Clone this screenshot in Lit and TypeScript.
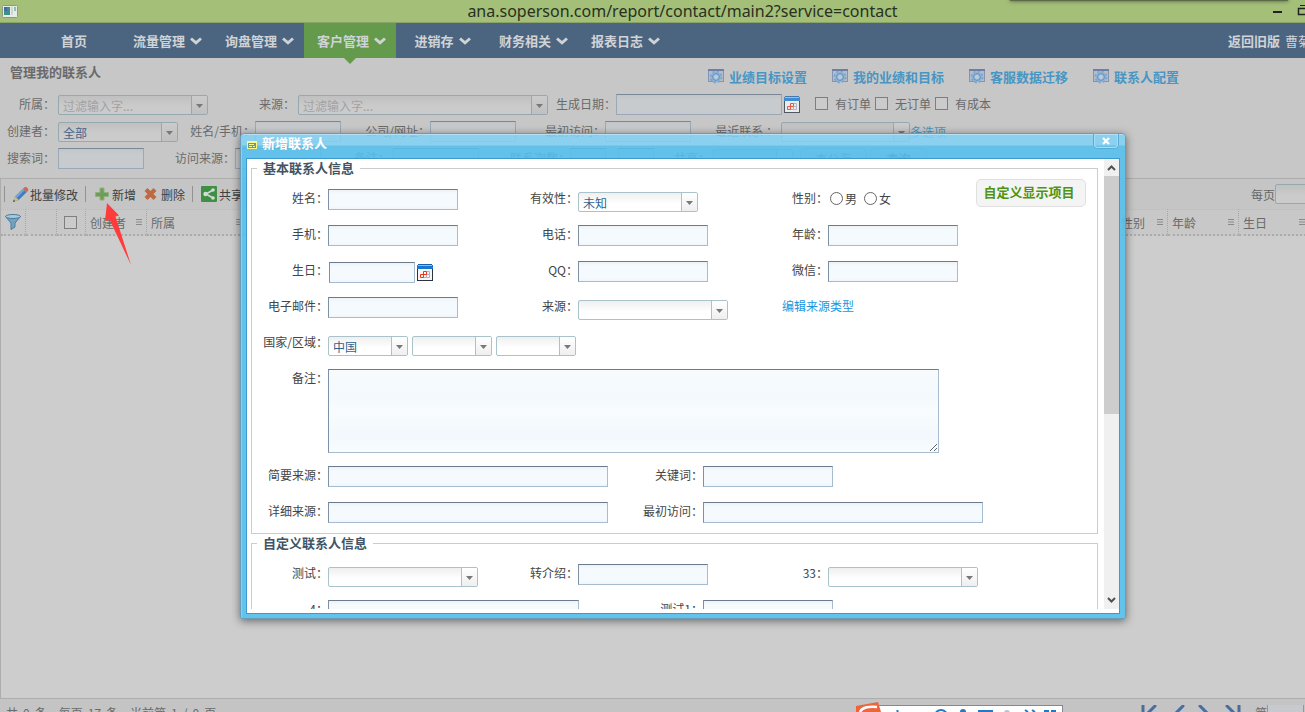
import { LitElement, html, css, svg, nothing } from "lit";
import { customElement, property } from "lit/decorators.js";
import { styleMap } from "lit/directives/style-map.js";

const base = css`
  *, *::before, *::after { box-sizing: border-box; }
  input, select, textarea, button { font: inherit; color: inherit; margin: 0; border-radius: 0; outline: none; }
  button { background: none; border: 0; padding: 0; cursor: pointer; }
  a { text-decoration: none; }
  svg { display: block; flex: none; }
`;

const calendarIcon = html`<svg width="16" height="17" viewBox="0 0 16 17">
  <rect x="0.5" y="3.5" width="15" height="13" fill="#f4f6f8" stroke="#2c3440"/>
  <rect x="0" y="1" width="16" height="4" fill="#1577d8"/><rect x="1" y="1" width="14" height="1" fill="#7cc4f8"/>
  <rect x="1" y="0" width="14" height="1" fill="#1a5fa8"/>
  <g fill="none" stroke="#aab4c0"><path d="M9.500 7.500h3v3h-3zM9.500 10.500h3v3h-3zM6.500 10.500h3v3h-3z"/></g>
  <g fill="none" stroke="#f03418"><path d="M6.500 7.500h3v3h-3zM3.500 10.500h3v3h-3z"/></g>
</svg>`;

const gearIcon = html`<svg width="16" height="15" viewBox="0 0 16 15">
  <rect x="0.5" y="0.5" width="15" height="12" fill="#b3bdc8" stroke="#8593b4"/><path d="M0 1h16" stroke="#6e7ea8" stroke-width="2"/>
  <circle cx="8" cy="8" r="5.200" fill="#8fb4d8"/>
  <circle cx="8" cy="8" r="5.600" fill="none" stroke="#7ba3cb" stroke-width="1.600" stroke-dasharray="2.200 2.200"/>
  <circle cx="8" cy="8" r="3.400" fill="#a3c2de" stroke="#5f8fbf" stroke-width="1"/>
  <circle cx="8" cy="8" r="1.700" fill="#c3cbd4"/>
</svg>`;

/** Drop-down with a gradient face and a separate arrow cell. */
@customElement("combo-box")
export class ComboBox extends LitElement {
  @property() label = "";
  @property() value = "";
  @property() placeholder = "";
  @property({ type: Number }) width = 150;

  static styles = [base, css`
    :host { display: block; flex: none; }
    .combo { position: relative; height: 20px; border: 1px solid var(--edge, #a9c0c8); border-radius: 2px; overflow: hidden;
      background: linear-gradient(var(--face-top, #f1f1f1), var(--face, #fff) 60%); }
    .field { appearance: none; display: block; width: 100%; height: 18px; padding: 2px 20px 0 4px; border: 0; background: transparent;
      color: var(--value, #2d6293); font-size: 12px; line-height: 16px; }
    .field::placeholder { color: var(--hint, #a0a0a0); opacity: 1; }
    .arrow { position: absolute; top: 0; right: 0; width: 16px; height: 18px; border-left: 1px solid var(--edge, #b8c8ce);
      background: linear-gradient(var(--face, #fff), var(--face-top, #ececec)); pointer-events: none; display: flex; align-items: center; justify-content: center; }
    .tri { margin-top: 2px; }
  `];

  render() {
    return html`<div class="combo" style=${styleMap({ width: `${this.width}px` })}>
      ${this.placeholder
        ? html`<input class="field" type="text" aria-label=${this.label} placeholder=${this.placeholder}>`
        : html`<select class="field" aria-label=${this.label}><option>${this.value}</option></select>`}
      <span class="arrow"><svg class="tri" width="7" height="4" viewBox="0 0 7 4"><path d="M0 0h7L3.500 4z" fill="#787878"/></svg></span>
    </div>`;
  }
}

interface Cell {
  label: string;
  kind: "text" | "combo" | "date" | "area" | "gender" | "region" | "link";
  width?: number;
  value?: string;
}

const basicRows: { cols: number; cells: Cell[] }[] = [
  { cols: 3, cells: [{ label: "姓名", kind: "text" }, { label: "有效性", kind: "combo", width: 120, value: "未知" }, { label: "性别", kind: "gender" }] },
  { cols: 3, cells: [{ label: "手机", kind: "text" }, { label: "电话", kind: "text" }, { label: "年龄", kind: "text" }] },
  { cols: 3, cells: [{ label: "生日", kind: "date" }, { label: "QQ", kind: "text" }, { label: "微信", kind: "text" }] },
  { cols: 3, cells: [{ label: "电子邮件", kind: "text" }, { label: "来源", kind: "combo", width: 150 }, { label: "编辑来源类型", kind: "link" }] },
  { cols: 1, cells: [{ label: "国家/区域", kind: "region" }] },
  { cols: 1, cells: [{ label: "备注", kind: "area" }] },
  { cols: 2, cells: [{ label: "简要来源", kind: "text", width: 280 }, { label: "关键词", kind: "text" }] },
  { cols: 2, cells: [{ label: "详细来源", kind: "text", width: 280 }, { label: "最初访问", kind: "text", width: 280 }] },
];

const customRows: typeof basicRows = [
  { cols: 3, cells: [{ label: "测试", kind: "combo", width: 150 }, { label: "转介绍", kind: "text" }, { label: "33", kind: "combo", width: 150 }] },
  { cols: 2, cells: [{ label: "4", kind: "text", width: 251 }, { label: "测试1", kind: "text" }] },
];

@customElement("contact-dialog")
export class ContactDialog extends LitElement {
  static styles = [base, css`
    :host { display: flex; flex-direction: column; border: 1px solid #6a9cb8; border-radius: 4px 4px 2px 2px; padding: 0 5px 4px;
      background: linear-gradient(rgba(128, 210, 246, 0.84) 0, rgba(128, 210, 246, 0.84) 11px, rgba(80, 192, 240, 0.84) 12px, rgba(84, 192, 238, 0.88) 26px, rgba(90, 194, 238, 0.92) 100%);
      box-shadow: inset 0 1px 0 #b5e0f4, inset 1px 0 0 #8ad0ee, 0 2px 8px rgba(0, 0, 0, 0.5); font-size: 12px; color: #444; }
    .bar { display: flex; height: 24px; align-items: flex-start; gap: 5px; padding: 0 2px 0 1px; }
    .bar-icon { margin-top: 7px; }
    .title { flex: 1; margin: 0; font-size: 13px; line-height: 18px; color: #fff; font-weight: 700; }
    .close { width: 24px; height: 14px; border: 1px solid #a6def6; border-top: 0; border-radius: 0 0 4px 4px; display: flex; align-items: center; justify-content: center; box-shadow: 0 0 0 1px #5aa9d4; }
    .body { flex: 1; min-height: 0; display: flex; border: 1px solid #3c9ace; background: #fff; padding-bottom: 4px; }
    .scroll { flex: 1; min-width: 0; overflow: hidden; padding: 0 6px 0 4px; display: flex; flex-direction: column; }
    .group { position: relative; flex: none; margin: 0; padding: 12px 0 10px; border: 1px solid #ccc; min-width: 0; }
    .legend { margin-left: 5px; padding: 0 6px; font-size: 13px; line-height: 18px; font-weight: 700; color: #435464; }
    .row { display: grid; height: 36px; align-items: start; }
    .row:last-child { height: 21px; }
    .cols3 { grid-template-columns: repeat(3, 250px); }
    .cols2 { grid-template-columns: repeat(2, 375px); }
    .tall { height: 97px; }
    .cell { display: flex; align-items: flex-start; }
    .label { flex: 0 0 76px; text-align: right; line-height: 18px; white-space: nowrap; }
    .text { height: 21px; border: 1px solid #a8bccf; border-top-color: #6a7b8e; border-left-color: #7d90a4; padding: 0 4px;
      background: linear-gradient(#eff2f4, #f5fafe 4px, #f5fafe 16px, #f1f5f8); }
    .date { width: 86px; height: 21px; }
    .area { width: 611px; height: 84px; background: linear-gradient(#f7fbfd, #f3f9fd 33%, #f8fcfd 50%, #f2f8fd 80%, #f8fcfd); resize: both; padding: 4px; }
    .low { margin-top: 3px; display: flex; gap: 4px; }
    .with-icon { display: flex; gap: 2px; margin: 1px 0 0 1px; align-items: center; }
    .radios { display: flex; align-items: center; height: 18px; padding-left: 2px; gap: 7px; }
    .radio { display: flex; align-items: center; gap: 2px; }
    .dot { appearance: none; width: 13px; height: 13px; border: 1px solid #666; border-radius: 50%; background: #fff; }
    .link { color: #1b95e0; line-height: 18px; margin-left: 30px; }
    .custom { position: absolute; top: 2px; right: 11px; width: 110px; height: 28px; border: 1px solid #e0e0e0; border-radius: 5px; background: #f4f4f4;
      color: #4f9410; font-size: 13px; font-weight: 700; line-height: 24px; padding: 0 4px 2px 0; white-space: nowrap; }
    .track { flex: 0 0 15px; display: flex; flex-direction: column; align-items: center; background: #f0f0f0; }
    .step { height: 17px; width: 15px; display: flex; align-items: center; justify-content: center; }
    .thumb { width: 15px; height: 238px; background: #cdcdcd; }
    .step.end { margin-top: auto; }
  `];

  private control(c: Cell, id: string) {
    switch (c.kind) {
      case "combo": return html`<div class="low"><combo-box label=${c.label} .width=${c.width ?? 150} .value=${c.value ?? ""}></combo-box></div>`;
      case "date": return html`<span class="with-icon"><input class="text date" id=${id} type="text"><button type="button" aria-label="日期">${calendarIcon}</button></span>`;
      case "area": return html`<textarea class="text area" id=${id}></textarea>`;
      case "gender": return html`<span class="radios">${["男", "女"].map((g) => html`<label class="radio"><input class="dot" type="radio" name="gender">${g}</label>`)}</span>`;
      case "region": return html`<div class="low">${["中国", "", ""].map((v) => html`<combo-box label=${c.label} .width=${80} .value=${v}></combo-box>`)}</div>`;
      default: return html`<input class="text" id=${id} type="text" style=${styleMap({ width: `${c.width ?? 130}px` })}>`;
    }
  }

  private rows(rows: typeof basicRows, prefix: string) {
    return html`<div>${rows.map((r, i) => html`<div class="row cols${r.cols} ${r.cells[0].kind === "area" ? "tall" : ""}">
      ${r.cells.map((c, j) => c.kind === "link"
        ? html`<a class="link" href="#">${c.label}</a>`
        : html`<div class="cell"><label class="label" for="${prefix}${i}${j}">${c.label}：</label>${this.control(c, `${prefix}${i}${j}`)}</div>`)}
    </div>`)}</div>`;
  }

  render() {
    return html`
      <header class="bar">
        <svg class="bar-icon" width="10" height="8" viewBox="0 0 10 8"><rect x="0.5" y="0.5" width="9" height="7" fill="#6a9a88" stroke="#fbf68c"/><path d="M1 1.500h8M2 3.500h5M2 5.500h3M6 5.500h2" stroke="#fbf68c"/></svg>
        <h2 class="title">新增联系人</h2>
        <button class="close" type="button" aria-label="关闭"><svg width="8" height="8" viewBox="0 0 8 8"><path d="M1 1l6 6M7 1l-6 6" stroke="#fff" stroke-width="2.200"/></svg></button>
      </header>
      <div class="body">
        <form class="scroll">
          <fieldset class="group">
            <legend class="legend">基本联系人信息</legend>
            ${this.rows(basicRows, "b")}
            <button class="custom" type="button">自定义显示项目</button>
          </fieldset>
          <fieldset class="group">
            <legend class="legend">自定义联系人信息</legend>
            ${this.rows(customRows, "c")}
          </fieldset>
        </form>
        <div class="track">
          <span class="step"><svg width="9" height="7" viewBox="0 0 9 7"><path d="M1 6l3.500-3.500L8 6" fill="none" stroke="#505050" stroke-width="2"/></svg></span>
          <span class="thumb"></span>
          <span class="step end"><svg width="9" height="7" viewBox="0 0 9 7"><path d="M1 1l3.500 3.500L8 1" fill="none" stroke="#505050" stroke-width="2"/></svg></span>
        </div>
      </div>`;
  }
}

const menu = ["首页", "流量管理", "询盘管理", "客户管理", "进销存", "财务相关", "报表日志"];
const links = ["业绩目标设置", "我的业绩和目标", "客服数据迁移", "联系人配置"];
const totals = [["共", "0", "条"], ["每页", "17", "条"], ["当前第", "1", "/", "0", "页"]];

@customElement("app-root")
export class AppRoot extends LitElement {
  static styles = [base, css`
    :host { position: relative; display: flex; flex-direction: column; height: 100vh; overflow: hidden; background: #c7c7c7; color: #6a6a6a;
      font-family: "Noto Sans CJK SC", "Liberation Sans", sans-serif; font-size: 12px;
      --edge: #98a8b0; --face: #cbcbcb; --face-top: #c0c0c0; --hint: #a2a2a2; --value: #45658c; }
    .titlebar { flex: none; position: relative; display: flex; align-items: center; height: 23px; background: #a3bf78; border-bottom: 1px solid #8ba268; padding-left: 2px; overflow: hidden; }
    .caption { flex: 1; margin: 0; padding-left: 74px; text-align: center; font: 400 16px/22px "Noto Sans", sans-serif; color: #2a3022; }
    .above { position: absolute; top: -4px; right: 17px; width: 278px; height: 5px; background: #5c6b4a; box-shadow: 0 0 4px #4b5938; }
    .wincontrols { display: flex; gap: 15px; flex: 0 0 32px; overflow: hidden; }
    .nav { flex: none; display: flex; height: 35px; background: #4b6580; color: #d0d3d6; font-size: 13px; font-weight: 700; padding-left: 30px; }
    .item { position: relative; display: flex; align-items: center; justify-content: center; gap: 5px; min-width: 90px; padding: 0 10px 0 13px; color: inherit; white-space: nowrap; }
    .item.home { padding: 0 14px 0 12px; }
    .item.active { background: #649a4c; }
    .notch { position: absolute; top: 35px; left: 40px; }
    .user { flex: 0 0 77px; margin-left: auto; display: flex; align-items: center; gap: 5px; overflow: hidden; white-space: nowrap; }
    .user a { color: inherit; }
    .name { font-weight: 400; }
    .heading { flex: none; display: flex; justify-content: space-between; height: 33px; padding: 0 126px 0 10px; }
    .pagetitle { margin: 0; font-size: 13px; line-height: 28px; font-weight: 700; }
    .links { display: flex; gap: 25px; padding-top: 4px; }
    .toplink { display: flex; align-items: center; gap: 5px; color: #4796c4; font-size: 13px; font-weight: 700; white-space: nowrap; height: 28px; }
    .filters { flex: none; height: 87px; }
    .frow { display: grid; align-items: center; height: 27px; white-space: nowrap; }
    .f1 { grid-template-columns: 58px 150px 90px 250px 68px 166px 33px 60px 60px 60px; }
    .f2 { grid-template-columns: 58px 120px 77px 86px 89px 86px 89px 86px 90px 129px auto; }
    .f3 { grid-template-columns: 58px 86px 91px 86px 72px 86px 91px 36px 12px 36px 59px 80px 74px 60px; }
    .flabel { text-align: right; line-height: 18px; padding-bottom: 1px; }
    .flabel.wide { padding-right: 3px; }
    .box { width: 100%; height: 21px; border: 1px solid #9aa8b8; border-top-color: #7a8794; background: linear-gradient(#c2c5c7, #c8cbcd 5px); padding: 0 4px; }
    .cal { padding-left: 2px; opacity: 0.75; }
    .check { display: flex; align-items: center; gap: 7px; padding-bottom: 2px; }
    .tick { appearance: none; display: block; width: 13px; height: 13px; border: 1px solid #7e7e7e; background: #cbcbcb; }
    .more { color: #4796c4; }
    .fbtn { height: 22px; margin-left: 7px; border: 1px solid #a8a8a8; border-radius: 4px; background: #c5c5c5; }
    .fbtn.green { margin-left: 3px; color: #44792c; font-weight: 700; }
    .panel { flex: 1; min-height: 0; display: flex; flex-direction: column; border-left: 1px solid #adadad; border-top: 1px solid #adadad; background: #cdcdcd; overflow: hidden; }
    .toolbar { flex: none; display: flex; align-items: center; height: 30px; padding-left: 3px; background: #c5c5c5; color: #404040; white-space: nowrap; }
    .sep { width: 1px; height: 16px; background: #929292; }
    .tool { display: flex; align-items: center; padding: 0 7px; }
    .tool.add { gap: 2px; padding: 0 8px; }
    .tool.del { gap: 4px; padding-left: 0; }
    .tool.share { gap: 2px; padding-left: 8px; }
    .perpage { flex: 0 0 54px; margin-left: auto; display: flex; align-items: center; overflow: hidden; color: #666; }
    .perbox { flex: none; width: 50px; height: 20px; border: 1px solid #98a8b0; border-radius: 2px; background: linear-gradient(#c0c0c0, #cbcbcb 60%); }
    .grid { flex: none; table-layout: fixed; width: calc(100% + 5px); border-collapse: separate; border-spacing: 0; background: #c8c8c8; }
    .grid th { height: 27px; padding: 0 4px; font-weight: 400; text-align: left; border-right: 1px dotted #a6a6a6; border-top: 1px dotted #bababa; border-bottom: 2px dotted #ababab; white-space: nowrap; }
    .grid th.pick { padding-left: 7px; }
    .head { display: flex; justify-content: space-between; align-items: center; }
    .w26 { width: 25px; } .w30 { width: 31px; } .w29 { width: 29px; } .w51 { width: 51px; } .w61 { width: 61px; } .w100 { width: 100px; } .w71 { width: 71px; }
    .footer { flex: none; display: flex; height: 14px; border-top: 1px solid #adadad; background: #c4c4c4; overflow: hidden; white-space: nowrap; padding: 6px 0 0 6px; line-height: 16px; }
    .count { flex: 1; display: flex; gap: 12px; }
    .total { display: flex; gap: 5px; }
    .pager { display: flex; gap: 12px; }
    .goto { display: flex; flex: 0 0 50px; margin-left: 14px; overflow: hidden; }
    .gobox { flex: none; width: 37px; height: 20px; border: 1px solid #8b98a8; background: #c6cace; margin-top: -1px; }
    .dialog { position: absolute; z-index: 2; top: 133px; left: 240px; right: 179px; height: 486px;
      --edge: #aac2ca; --face: #fff; --face-top: #efefef; --value: #2d6293; }
    .pointer { position: absolute; z-index: 3; top: 203px; left: 104px; pointer-events: none; }
    .ime { position: absolute; z-index: 3; bottom: 0; left: 856px; }
  `];

  private flabel(text: string, id = "", wide = false) {
    return html`<label class="flabel ${wide ? "wide" : ""}" for=${id || nothing}>${text}</label>`;
  }

  private box(id: string, label = "") {
    return html`<input class="box" id=${id} type="text" aria-label=${label || nothing}>`;
  }

  render() {
    const bars = html`<svg width="6" height="6" viewBox="0 0 6 6"><path d="M0 .5h6M0 3h6M0 5.500h6" stroke="#8a8a8a"/></svg>`;
    const down = html`<svg width="12" height="8" viewBox="0 0 12 8"><path d="M1 1.500L6 5.900l5-4.400" fill="none" stroke="#d0d3d6" stroke-width="2.800"/></svg>`;
    return html`
      <header class="titlebar">
        <svg width="16" height="13" viewBox="0 0 16 13"><rect x="0.5" y="0.5" width="15" height="12" rx="1" fill="#e8ece8" stroke="#8d9a80"/><rect x="2" y="2" width="6" height="8" fill="#3f8f88"/><rect x="2" y="2" width="3" height="4" fill="#3a6fa0"/><rect x="9" y="2" width="2" height="8" fill="#cfd4d4"/><rect x="12" y="2" width="2" height="4" fill="#8fc0a8"/></svg>
        <h1 class="caption">ana.soperson.com/report/contact/main2?service=contact</h1>
        <span class="wincontrols">
          <svg width="9" height="12" viewBox="0 0 9 12"><path d="M0 7h9" stroke="#222" stroke-width="2"/></svg>
          <svg width="12" height="12" viewBox="0 0 12 12"><path d="M1.500 3.500h8v6h-8z" fill="none" stroke="#222" stroke-width="1.500"/><path d="M3 .500h9v7" fill="none" stroke="#222"/></svg>
        </span>
        <span class="above"></span>
      </header>
      <nav class="nav">
        ${menu.map((m, i) => html`<a class="item ${i === 0 ? "home" : ""} ${m === "客户管理" ? "active" : ""}" href="#">${m}${i === 0 ? nothing : down}
          ${m === "客户管理" ? html`<svg class="notch" width="12" height="6" viewBox="0 0 12 6"><path d="M0 0h12L6 6z" fill="#649a4c"/></svg>` : nothing}</a>`)}
        <span class="user"><a href="#">返回旧版</a><span class="name">曹菊</span></span>
      </nav>
      <div class="heading">
        <h2 class="pagetitle">管理我的联系人</h2>
        <div class="links">${links.map((l) => html`<a class="toplink" href="#">${gearIcon}${l}</a>`)}</div>
      </div>
      <form class="filters">
        <div class="frow f1">
          ${this.flabel("所属：", "", true)}<combo-box label="所属" placeholder="过滤输入字..." .width=${150}></combo-box>
          ${this.flabel("来源：", "", true)}<combo-box label="来源" placeholder="过滤输入字..." .width=${250}></combo-box>
          ${this.flabel("生成日期：", "created")}${this.box("created")}
          <button class="cal" type="button" aria-label="日期">${calendarIcon}</button>
          ${["有订单", "无订单", "有成本"].map((t) => html`<label class="check"><input class="tick" type="checkbox">${t}</label>`)}
        </div>
        <div class="frow f2">
          ${this.flabel("创建者：", "", true)}<combo-box label="创建者" value="全部" .width=${120}></combo-box>
          ${this.flabel("姓名/手机：", "name")}${this.box("name")}
          ${this.flabel("公司/网址：", "company")}${this.box("company")}
          ${this.flabel("最初访问：", "first")}${this.box("first")}
          ${this.flabel("最近联系 ：", "", true)}<combo-box label="最近联系" .width=${129}></combo-box>
          <a class="more" href="#">多选项</a>
        </div>
        <div class="frow f3">
          ${this.flabel("搜索词：", "word", true)}${this.box("word")}
          ${this.flabel("访问来源：", "from")}${this.box("from")}
          ${this.flabel("备注：", "note", true)}${this.box("note")}
          ${this.flabel("联系次数：", "times")}${this.box("times")}<span></span>${this.box("times2", "联系次数")}
          ${this.flabel("共享：", "", true)}<combo-box label="共享" .width=${80}></combo-box>
          <button class="fbtn" type="button">查公海</button><button class="fbtn green" type="button">查询</button>
        </div>
      </form>
      <main class="panel">
        <div class="toolbar">
          <span class="sep"></span>
          <button class="tool" type="button">
            <svg width="18" height="17" viewBox="0 0 18 17"><path d="M1.500 15.500l1.700-5L11 2.700l3.600 3.500-7.900 7.700z" fill="#3f7cc0"/><path d="M3.200 10.500L11 2.700l1.600 1.600-7.800 7.800z" fill="#74a6dc"/><path d="M11 2.700l1.500-1.500c1.700-1 4.600 1.500 3.600 3.500l-1.500 1.500z" fill="#cc6a52"/><path d="M1.500 15.500l1.700-5 3.500 3.400z" fill="#d9b878"/><path d="M1 16l.8-2.300 1.500 1.500z" fill="#444"/></svg>批量修改</button>
          <span class="sep"></span>
          <button class="tool add" type="button">
            <svg width="16" height="16" viewBox="0 0 16 16"><path d="M6 2h4v4.500h4.500v4H10V14H6v-3.500H1.500v-4H6z" fill="#6f9c58" stroke="#8fb07e"/></svg>新增</button>
          <button class="tool del" type="button">
            <svg width="13" height="14" viewBox="0 0 13 14"><path d="M2 2.500l9 9M11 2.500l-9 9" stroke="#bf6844" stroke-width="4.200"/></svg>删除</button>
          <span class="sep"></span>
          <button class="tool share" type="button">
            <svg width="16" height="16" viewBox="0 0 16 16"><rect width="16" height="16" rx="1" fill="#3f8f45"/><path d="M12 4L5 8l7 4" fill="none" stroke="#d4dcd4" stroke-width="1.500"/><g fill="#d4dcd4"><circle cx="12" cy="4" r="1.800"/><circle cx="4.500" cy="8" r="2.200"/><circle cx="12" cy="12" r="1.800"/></g></svg>共享</button>
          <label class="perpage">每页<input class="perbox" type="text"></label>
        </div>
        <table class="grid">
          <thead><tr>
            <th class="w26"><svg width="16" height="16" viewBox="0 0 16 16"><path d="M.5 2.500L6 9v6.500l4-2.500V9l5.500-6.500z" fill="#76a2c0" stroke="#4a7c9e"/><ellipse cx="8" cy="2.500" rx="7.500" ry="2" fill="#a9c8da" stroke="#4a7c9e"/></svg></th>
            <th class="w30"></th>
            <th class="pick w29"><input class="tick" type="checkbox" aria-label="全选"></th>
            ${["创建者", "所属"].map((t, i) => html`<th class=${i ? "w100" : "w61"}><span class="head">${t}${bars}</span></th>`)}
            <th></th>
            ${["性别", "年龄", "生日"].map((t, i) => html`<th class=${i ? "w71" : "w51"}><span class="head">${t}${bars}</span></th>`)}
          </tr></thead>
        </table>
      </main>
      <footer class="footer">
        <span class="count">${totals.map((t) => html`<span class="total">${t.map((w) => html`<span>${w}</span>`)}</span>`)}</span>
        <span class="pager">${["M2 0v16M14 1L5 10l9 9", "M14 1L5 10l9 9", "M3 1l9 9-9 9", "M14 0v16M2 1l9 9-9 9"].map((d) => html`<svg width="16" height="16" viewBox="0 0 16 16">${svg`<path d=${d} fill="none" stroke="#4a6da0" stroke-width="3" stroke-linecap="round"/>`}</svg>`)}</span>
        <label class="goto">第<input class="gobox" type="text"></label>
      </footer>
      <contact-dialog class="dialog"></contact-dialog>
      <svg class="pointer" width="28" height="64" viewBox="0 0 28 64"><path d="M3 0l12 12.500-3.500 1L27 62 5.500 16.500 1 18z" fill="#ff3b3b"/></svg>
      <svg class="ime" width="208" height="10" viewBox="0 0 208 10">
        <rect x="10.500" y="3.500" width="196" height="12" fill="#fff" stroke="#85898d"/>
        <path d="M0 4L22 0l3 10H0z" fill="#f0643a"/><path d="M4 10c2-5 10-6 17-5" fill="none" stroke="#fff" stroke-width="2.500"/>
        <g fill="none" stroke="#2478c4" stroke-width="2"><path d="M41.500 8v2M122 9h15M169 8l3 2M176 8l3 2M188 9h5M195 9h5"/><circle cx="85" cy="14" r="6"/></g>
        <circle cx="107" cy="10" r="3" fill="#2478c4"/><circle cx="151" cy="11" r="3" fill="#b8c2cc"/>
      </svg>`;
  }
}
